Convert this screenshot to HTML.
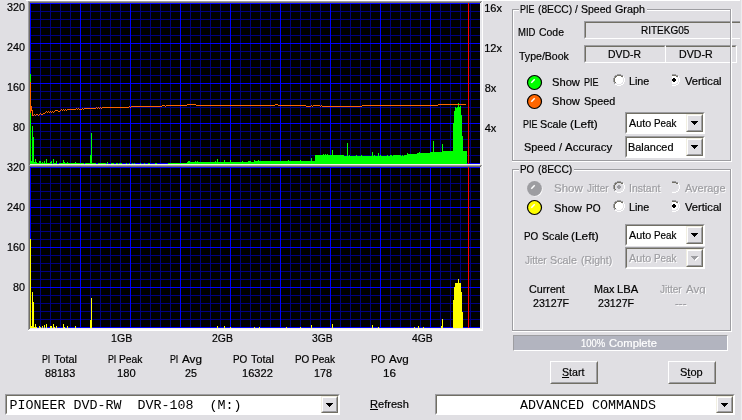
<!DOCTYPE html>
<html>
<head>
<meta charset="utf-8">
<title>PIE (8ECC) / Speed Graph</title>
<style>
html,body{margin:0;padding:0;}
body{width:742px;height:420px;overflow:hidden;background:#e0dfe3;position:relative;
 font-family:"Liberation Sans",sans-serif;font-size:11px;color:#000;}
#w{position:absolute;left:0;top:0;width:742px;height:420px;will-change:transform;-webkit-text-stroke:0.2px currentColor;}
.t{position:absolute;white-space:nowrap;line-height:13px;height:13px;font-size:11px;transform-origin:0 0;}
.mw{width:742px;}
.mw span{position:absolute;top:0;transform-origin:0 0;white-space:nowrap;}
.dis{color:#9d9da1;text-shadow:1px 1px 0 #fff;}
.wht{color:#fff;}
.ln{position:absolute;background:#9d9da1;}
.lw{position:absolute;background:#fff;}
.gt{position:absolute;background:#e0dfe3;height:13px;}
.sunk{position:absolute;box-sizing:border-box;border:1px solid;border-color:#9d9da1 #fff #fff #9d9da1;}
.sunk:before{content:"";position:absolute;left:0;top:0;right:0;bottom:0;border:1px solid;border-color:#716f64 #f1efe2 #f1efe2 #716f64;}
.fld{background:#e0dfe3;}
.fld:before{border-color:#716f64 #e0dfe3 #e0dfe3 #716f64;}
.cmb{background:#fff;}
.cmb:before{border-color:#716f64 #fff #fff #716f64;}
.cmb.off{background:#e0dfe3;}
.btn{position:absolute;box-sizing:border-box;background:#e0dfe3;border:1px solid;border-color:#f1efe2 #716f64 #716f64 #f1efe2;}
.btn:before{content:"";position:absolute;left:0;top:0;right:0;bottom:0;border:1px solid;border-color:#fff #9d9da1 #9d9da1 #fff;}
.pb{border-color:#fff #716f64 #716f64 #fff;}
.pb:before{border-color:#e0dfe3 #9d9da1 #9d9da1 #e0dfe3;}
.dd{right:1px;top:1px;bottom:1px;width:17px;}
.dd svg{position:absolute;left:4px;top:6px;width:8px;height:5px;}
.dd.rc{width:17px;}
.dd.rc svg{left:4px;top:6px;}
.mono{position:absolute;font-family:"Liberation Mono",monospace;font-size:13.33px;line-height:16px;white-space:pre;-webkit-text-stroke:0;color:#000;}
.led{position:absolute;width:17px;height:17px;}
.rad{position:absolute;width:12px;height:12px;}
.cov{position:absolute;background:#e0dfe3;}
u{text-decoration:underline;}
</style>
</head>
<body>
<div id="w">
<div class="lw" style="left:26px;top:0;width:714px;height:1px"></div>
<svg width="455" height="330" viewBox="0 0 455 330" shape-rendering="crispEdges" style="position:absolute;left:28px;top:1px">
<rect x="452" y="0" width="1" height="330" fill="#eaeaed"/>
<rect x="453" y="0" width="1" height="330" fill="#e6e6ea"/>
<rect x="454" y="0" width="1" height="330" fill="#ffffff"/>
<rect x="0" y="327" width="453" height="1" fill="#f1efe2"/>
<rect x="0" y="328" width="455" height="1" fill="#fafafa"/>
<rect x="0" y="329" width="455" height="1" fill="#ffffff"/>
<rect x="0" y="0" width="454" height="1" fill="#9d9da1"/>
<rect x="1" y="1" width="452" height="1" fill="#716f64"/>
<rect x="0" y="0" width="1" height="329" fill="#9d9da1"/>
<rect x="1" y="1" width="1" height="327" fill="#716f64"/>
<rect x="2" y="2" width="450" height="161" fill="#000"/>
<rect x="2" y="166" width="450" height="161" fill="#000"/>
<rect x="2" y="163" width="451" height="1" fill="#f1efe2"/>
<rect x="0" y="164" width="454" height="1" fill="#9d9da1"/>
<rect x="1" y="165" width="452" height="1" fill="#716f64"/>
<rect x="2" y="10" width="450" height="1" fill="#000080"/>
<rect x="2" y="18" width="450" height="1" fill="#000080"/>
<rect x="2" y="26" width="450" height="1" fill="#000080"/>
<rect x="2" y="34" width="450" height="1" fill="#000080"/>
<rect x="2" y="50" width="450" height="1" fill="#000080"/>
<rect x="2" y="58" width="450" height="1" fill="#000080"/>
<rect x="2" y="66" width="450" height="1" fill="#000080"/>
<rect x="2" y="74" width="450" height="1" fill="#000080"/>
<rect x="2" y="90" width="450" height="1" fill="#000080"/>
<rect x="2" y="98" width="450" height="1" fill="#000080"/>
<rect x="2" y="106" width="450" height="1" fill="#000080"/>
<rect x="2" y="114" width="450" height="1" fill="#000080"/>
<rect x="2" y="130" width="450" height="1" fill="#000080"/>
<rect x="2" y="138" width="450" height="1" fill="#000080"/>
<rect x="2" y="146" width="450" height="1" fill="#000080"/>
<rect x="2" y="154" width="450" height="1" fill="#000080"/>
<rect x="12" y="2" width="1" height="161" fill="#000080"/>
<rect x="22" y="2" width="1" height="161" fill="#000080"/>
<rect x="32" y="2" width="1" height="161" fill="#000080"/>
<rect x="42" y="2" width="1" height="161" fill="#000080"/>
<rect x="62" y="2" width="1" height="161" fill="#000080"/>
<rect x="72" y="2" width="1" height="161" fill="#000080"/>
<rect x="82" y="2" width="1" height="161" fill="#000080"/>
<rect x="92" y="2" width="1" height="161" fill="#000080"/>
<rect x="112" y="2" width="1" height="161" fill="#000080"/>
<rect x="122" y="2" width="1" height="161" fill="#000080"/>
<rect x="132" y="2" width="1" height="161" fill="#000080"/>
<rect x="142" y="2" width="1" height="161" fill="#000080"/>
<rect x="162" y="2" width="1" height="161" fill="#000080"/>
<rect x="172" y="2" width="1" height="161" fill="#000080"/>
<rect x="182" y="2" width="1" height="161" fill="#000080"/>
<rect x="192" y="2" width="1" height="161" fill="#000080"/>
<rect x="212" y="2" width="1" height="161" fill="#000080"/>
<rect x="222" y="2" width="1" height="161" fill="#000080"/>
<rect x="232" y="2" width="1" height="161" fill="#000080"/>
<rect x="242" y="2" width="1" height="161" fill="#000080"/>
<rect x="262" y="2" width="1" height="161" fill="#000080"/>
<rect x="272" y="2" width="1" height="161" fill="#000080"/>
<rect x="282" y="2" width="1" height="161" fill="#000080"/>
<rect x="292" y="2" width="1" height="161" fill="#000080"/>
<rect x="312" y="2" width="1" height="161" fill="#000080"/>
<rect x="322" y="2" width="1" height="161" fill="#000080"/>
<rect x="332" y="2" width="1" height="161" fill="#000080"/>
<rect x="342" y="2" width="1" height="161" fill="#000080"/>
<rect x="362" y="2" width="1" height="161" fill="#000080"/>
<rect x="372" y="2" width="1" height="161" fill="#000080"/>
<rect x="382" y="2" width="1" height="161" fill="#000080"/>
<rect x="392" y="2" width="1" height="161" fill="#000080"/>
<rect x="412" y="2" width="1" height="161" fill="#000080"/>
<rect x="422" y="2" width="1" height="161" fill="#000080"/>
<rect x="432" y="2" width="1" height="161" fill="#000080"/>
<rect x="442" y="2" width="1" height="161" fill="#000080"/>
<rect x="2" y="2" width="450" height="1" fill="#0000ff"/>
<rect x="2" y="42" width="450" height="1" fill="#0000ff"/>
<rect x="2" y="82" width="450" height="1" fill="#0000ff"/>
<rect x="2" y="122" width="450" height="1" fill="#0000ff"/>
<rect x="2" y="162" width="450" height="1" fill="#0000ff"/>
<rect x="2" y="2" width="1" height="161" fill="#0000ff"/>
<rect x="52" y="2" width="1" height="161" fill="#0000ff"/>
<rect x="102" y="2" width="1" height="161" fill="#0000ff"/>
<rect x="152" y="2" width="1" height="161" fill="#0000ff"/>
<rect x="202" y="2" width="1" height="161" fill="#0000ff"/>
<rect x="252" y="2" width="1" height="161" fill="#0000ff"/>
<rect x="302" y="2" width="1" height="161" fill="#0000ff"/>
<rect x="352" y="2" width="1" height="161" fill="#0000ff"/>
<rect x="402" y="2" width="1" height="161" fill="#0000ff"/>
<rect x="2" y="174" width="450" height="1" fill="#000080"/>
<rect x="2" y="182" width="450" height="1" fill="#000080"/>
<rect x="2" y="190" width="450" height="1" fill="#000080"/>
<rect x="2" y="198" width="450" height="1" fill="#000080"/>
<rect x="2" y="214" width="450" height="1" fill="#000080"/>
<rect x="2" y="222" width="450" height="1" fill="#000080"/>
<rect x="2" y="230" width="450" height="1" fill="#000080"/>
<rect x="2" y="238" width="450" height="1" fill="#000080"/>
<rect x="2" y="254" width="450" height="1" fill="#000080"/>
<rect x="2" y="262" width="450" height="1" fill="#000080"/>
<rect x="2" y="270" width="450" height="1" fill="#000080"/>
<rect x="2" y="278" width="450" height="1" fill="#000080"/>
<rect x="2" y="294" width="450" height="1" fill="#000080"/>
<rect x="2" y="302" width="450" height="1" fill="#000080"/>
<rect x="2" y="310" width="450" height="1" fill="#000080"/>
<rect x="2" y="318" width="450" height="1" fill="#000080"/>
<rect x="12" y="166" width="1" height="161" fill="#000080"/>
<rect x="22" y="166" width="1" height="161" fill="#000080"/>
<rect x="32" y="166" width="1" height="161" fill="#000080"/>
<rect x="42" y="166" width="1" height="161" fill="#000080"/>
<rect x="62" y="166" width="1" height="161" fill="#000080"/>
<rect x="72" y="166" width="1" height="161" fill="#000080"/>
<rect x="82" y="166" width="1" height="161" fill="#000080"/>
<rect x="92" y="166" width="1" height="161" fill="#000080"/>
<rect x="112" y="166" width="1" height="161" fill="#000080"/>
<rect x="122" y="166" width="1" height="161" fill="#000080"/>
<rect x="132" y="166" width="1" height="161" fill="#000080"/>
<rect x="142" y="166" width="1" height="161" fill="#000080"/>
<rect x="162" y="166" width="1" height="161" fill="#000080"/>
<rect x="172" y="166" width="1" height="161" fill="#000080"/>
<rect x="182" y="166" width="1" height="161" fill="#000080"/>
<rect x="192" y="166" width="1" height="161" fill="#000080"/>
<rect x="212" y="166" width="1" height="161" fill="#000080"/>
<rect x="222" y="166" width="1" height="161" fill="#000080"/>
<rect x="232" y="166" width="1" height="161" fill="#000080"/>
<rect x="242" y="166" width="1" height="161" fill="#000080"/>
<rect x="262" y="166" width="1" height="161" fill="#000080"/>
<rect x="272" y="166" width="1" height="161" fill="#000080"/>
<rect x="282" y="166" width="1" height="161" fill="#000080"/>
<rect x="292" y="166" width="1" height="161" fill="#000080"/>
<rect x="312" y="166" width="1" height="161" fill="#000080"/>
<rect x="322" y="166" width="1" height="161" fill="#000080"/>
<rect x="332" y="166" width="1" height="161" fill="#000080"/>
<rect x="342" y="166" width="1" height="161" fill="#000080"/>
<rect x="362" y="166" width="1" height="161" fill="#000080"/>
<rect x="372" y="166" width="1" height="161" fill="#000080"/>
<rect x="382" y="166" width="1" height="161" fill="#000080"/>
<rect x="392" y="166" width="1" height="161" fill="#000080"/>
<rect x="412" y="166" width="1" height="161" fill="#000080"/>
<rect x="422" y="166" width="1" height="161" fill="#000080"/>
<rect x="432" y="166" width="1" height="161" fill="#000080"/>
<rect x="442" y="166" width="1" height="161" fill="#000080"/>
<rect x="2" y="166" width="450" height="1" fill="#0000ff"/>
<rect x="2" y="206" width="450" height="1" fill="#0000ff"/>
<rect x="2" y="246" width="450" height="1" fill="#0000ff"/>
<rect x="2" y="286" width="450" height="1" fill="#0000ff"/>
<rect x="2" y="326" width="450" height="1" fill="#0000ff"/>
<rect x="2" y="166" width="1" height="161" fill="#0000ff"/>
<rect x="52" y="166" width="1" height="161" fill="#0000ff"/>
<rect x="102" y="166" width="1" height="161" fill="#0000ff"/>
<rect x="152" y="166" width="1" height="161" fill="#0000ff"/>
<rect x="202" y="166" width="1" height="161" fill="#0000ff"/>
<rect x="252" y="166" width="1" height="161" fill="#0000ff"/>
<rect x="302" y="166" width="1" height="161" fill="#0000ff"/>
<rect x="352" y="166" width="1" height="161" fill="#0000ff"/>
<rect x="402" y="166" width="1" height="161" fill="#0000ff"/>
<rect x="2" y="73" width="1" height="90" fill="#00ff00"/>
<rect x="3" y="160" width="1" height="3" fill="#00ff00"/>
<rect x="4" y="125" width="1" height="38" fill="#00ff00"/>
<rect x="5" y="136" width="1" height="27" fill="#00ff00"/>
<rect x="6" y="161" width="1" height="2" fill="#00ff00"/>
<rect x="7" y="158" width="1" height="5" fill="#00ff00"/>
<rect x="8" y="161" width="1" height="2" fill="#00ff00"/>
<rect x="9" y="162" width="2" height="1" fill="#00ff00"/>
<rect x="11" y="160" width="2" height="3" fill="#00ff00"/>
<rect x="13" y="162" width="1" height="1" fill="#00ff00"/>
<rect x="14" y="161" width="1" height="2" fill="#00ff00"/>
<rect x="15" y="162" width="1" height="1" fill="#00ff00"/>
<rect x="16" y="160" width="1" height="3" fill="#00ff00"/>
<rect x="17" y="162" width="1" height="1" fill="#00ff00"/>
<rect x="18" y="158" width="1" height="5" fill="#00ff00"/>
<rect x="19" y="162" width="3" height="1" fill="#00ff00"/>
<rect x="22" y="161" width="1" height="2" fill="#00ff00"/>
<rect x="23" y="160" width="1" height="3" fill="#00ff00"/>
<rect x="25" y="158" width="1" height="5" fill="#00ff00"/>
<rect x="26" y="162" width="2" height="1" fill="#00ff00"/>
<rect x="28" y="160" width="1" height="3" fill="#00ff00"/>
<rect x="31" y="162" width="4" height="1" fill="#00ff00"/>
<rect x="35" y="159" width="1" height="4" fill="#00ff00"/>
<rect x="36" y="161" width="1" height="2" fill="#00ff00"/>
<rect x="37" y="162" width="2" height="1" fill="#00ff00"/>
<rect x="39" y="161" width="1" height="2" fill="#00ff00"/>
<rect x="40" y="162" width="7" height="1" fill="#00ff00"/>
<rect x="47" y="161" width="1" height="2" fill="#00ff00"/>
<rect x="48" y="162" width="8" height="1" fill="#00ff00"/>
<rect x="57" y="162" width="5" height="1" fill="#00ff00"/>
<rect x="62" y="154" width="1" height="9" fill="#00ff00"/>
<rect x="63" y="132" width="1" height="31" fill="#00ff00"/>
<rect x="64" y="162" width="4" height="1" fill="#00ff00"/>
<rect x="70" y="162" width="8" height="1" fill="#00ff00"/>
<rect x="79" y="161" width="1" height="2" fill="#00ff00"/>
<rect x="83" y="162" width="3" height="1" fill="#00ff00"/>
<rect x="88" y="162" width="2" height="1" fill="#00ff00"/>
<rect x="91" y="162" width="3" height="1" fill="#00ff00"/>
<rect x="98" y="162" width="1" height="1" fill="#00ff00"/>
<rect x="101" y="162" width="1" height="1" fill="#00ff00"/>
<rect x="104" y="162" width="1" height="1" fill="#00ff00"/>
<rect x="106" y="162" width="1" height="1" fill="#00ff00"/>
<rect x="112" y="162" width="1" height="1" fill="#00ff00"/>
<rect x="116" y="162" width="1" height="1" fill="#00ff00"/>
<rect x="120" y="162" width="2" height="1" fill="#00ff00"/>
<rect x="127" y="162" width="2" height="1" fill="#00ff00"/>
<rect x="140" y="162" width="19" height="1" fill="#00ff00"/>
<rect x="159" y="161" width="1" height="2" fill="#00ff00"/>
<rect x="160" y="160" width="2" height="3" fill="#00ff00"/>
<rect x="162" y="161" width="5" height="2" fill="#00ff00"/>
<rect x="167" y="160" width="1" height="3" fill="#00ff00"/>
<rect x="168" y="161" width="1" height="2" fill="#00ff00"/>
<rect x="169" y="160" width="1" height="3" fill="#00ff00"/>
<rect x="170" y="161" width="17" height="2" fill="#00ff00"/>
<rect x="187" y="160" width="1" height="3" fill="#00ff00"/>
<rect x="188" y="161" width="1" height="2" fill="#00ff00"/>
<rect x="189" y="158" width="1" height="5" fill="#00ff00"/>
<rect x="190" y="161" width="6" height="2" fill="#00ff00"/>
<rect x="196" y="159" width="1" height="4" fill="#00ff00"/>
<rect x="197" y="161" width="5" height="2" fill="#00ff00"/>
<rect x="202" y="159" width="1" height="4" fill="#00ff00"/>
<rect x="203" y="161" width="11" height="2" fill="#00ff00"/>
<rect x="214" y="160" width="1" height="3" fill="#00ff00"/>
<rect x="215" y="161" width="5" height="2" fill="#00ff00"/>
<rect x="220" y="160" width="3" height="3" fill="#00ff00"/>
<rect x="223" y="161" width="3" height="2" fill="#00ff00"/>
<rect x="226" y="159" width="1" height="4" fill="#00ff00"/>
<rect x="227" y="160" width="3" height="3" fill="#00ff00"/>
<rect x="230" y="159" width="1" height="4" fill="#00ff00"/>
<rect x="231" y="160" width="29" height="3" fill="#00ff00"/>
<rect x="260" y="159" width="1" height="4" fill="#00ff00"/>
<rect x="261" y="160" width="11" height="3" fill="#00ff00"/>
<rect x="272" y="159" width="1" height="4" fill="#00ff00"/>
<rect x="273" y="160" width="10" height="3" fill="#00ff00"/>
<rect x="283" y="157" width="1" height="6" fill="#00ff00"/>
<rect x="284" y="160" width="3" height="3" fill="#00ff00"/>
<rect x="287" y="154" width="8" height="9" fill="#00ff00"/>
<rect x="295" y="153" width="1" height="10" fill="#00ff00"/>
<rect x="296" y="154" width="1" height="9" fill="#00ff00"/>
<rect x="297" y="153" width="1" height="10" fill="#00ff00"/>
<rect x="298" y="154" width="1" height="9" fill="#00ff00"/>
<rect x="299" y="153" width="1" height="10" fill="#00ff00"/>
<rect x="300" y="154" width="4" height="9" fill="#00ff00"/>
<rect x="304" y="149" width="1" height="14" fill="#00ff00"/>
<rect x="305" y="154" width="11" height="9" fill="#00ff00"/>
<rect x="316" y="155" width="3" height="8" fill="#00ff00"/>
<rect x="319" y="142" width="1" height="21" fill="#00ff00"/>
<rect x="320" y="155" width="1" height="8" fill="#00ff00"/>
<rect x="321" y="154" width="1" height="9" fill="#00ff00"/>
<rect x="322" y="155" width="6" height="8" fill="#00ff00"/>
<rect x="328" y="154" width="1" height="9" fill="#00ff00"/>
<rect x="329" y="155" width="4" height="8" fill="#00ff00"/>
<rect x="333" y="154" width="1" height="9" fill="#00ff00"/>
<rect x="334" y="155" width="10" height="8" fill="#00ff00"/>
<rect x="344" y="151" width="1" height="12" fill="#00ff00"/>
<rect x="345" y="155" width="1" height="8" fill="#00ff00"/>
<rect x="346" y="154" width="1" height="9" fill="#00ff00"/>
<rect x="347" y="155" width="3" height="8" fill="#00ff00"/>
<rect x="350" y="152" width="1" height="11" fill="#00ff00"/>
<rect x="351" y="155" width="1" height="8" fill="#00ff00"/>
<rect x="352" y="154" width="1" height="9" fill="#00ff00"/>
<rect x="353" y="155" width="6" height="8" fill="#00ff00"/>
<rect x="359" y="154" width="1" height="9" fill="#00ff00"/>
<rect x="360" y="155" width="2" height="8" fill="#00ff00"/>
<rect x="362" y="154" width="2" height="9" fill="#00ff00"/>
<rect x="364" y="155" width="1" height="8" fill="#00ff00"/>
<rect x="365" y="154" width="8" height="9" fill="#00ff00"/>
<rect x="373" y="155" width="1" height="8" fill="#00ff00"/>
<rect x="374" y="154" width="1" height="9" fill="#00ff00"/>
<rect x="375" y="155" width="1" height="8" fill="#00ff00"/>
<rect x="376" y="154" width="3" height="9" fill="#00ff00"/>
<rect x="379" y="152" width="1" height="11" fill="#00ff00"/>
<rect x="380" y="153" width="9" height="10" fill="#00ff00"/>
<rect x="389" y="152" width="2" height="11" fill="#00ff00"/>
<rect x="391" y="151" width="1" height="12" fill="#00ff00"/>
<rect x="392" y="152" width="10" height="11" fill="#00ff00"/>
<rect x="402" y="151" width="3" height="12" fill="#00ff00"/>
<rect x="405" y="140" width="1" height="23" fill="#00ff00"/>
<rect x="406" y="151" width="8" height="12" fill="#00ff00"/>
<rect x="414" y="143" width="1" height="20" fill="#00ff00"/>
<rect x="415" y="150" width="10" height="13" fill="#00ff00"/>
<rect x="425" y="122" width="1" height="41" fill="#00ff00"/>
<rect x="426" y="110" width="1" height="53" fill="#00ff00"/>
<rect x="427" y="106" width="1" height="57" fill="#00ff00"/>
<rect x="428" y="107" width="1" height="56" fill="#00ff00"/>
<rect x="429" y="106" width="1" height="57" fill="#00ff00"/>
<rect x="430" y="102" width="1" height="61" fill="#00ff00"/>
<rect x="431" y="106" width="1" height="57" fill="#00ff00"/>
<rect x="432" y="105" width="1" height="58" fill="#00ff00"/>
<rect x="433" y="114" width="1" height="49" fill="#00ff00"/>
<rect x="434" y="135" width="1" height="28" fill="#00ff00"/>
<rect x="435" y="150" width="4" height="13" fill="#00ff00"/>
<rect x="2" y="238" width="1" height="89" fill="#ffff00"/>
<rect x="3" y="325" width="1" height="2" fill="#ffff00"/>
<rect x="4" y="291" width="1" height="36" fill="#ffff00"/>
<rect x="5" y="301" width="1" height="26" fill="#ffff00"/>
<rect x="6" y="326" width="1" height="1" fill="#ffff00"/>
<rect x="7" y="323" width="1" height="4" fill="#ffff00"/>
<rect x="8" y="326" width="1" height="1" fill="#ffff00"/>
<rect x="11" y="325" width="1" height="2" fill="#ffff00"/>
<rect x="12" y="326" width="1" height="1" fill="#ffff00"/>
<rect x="14" y="325" width="1" height="2" fill="#ffff00"/>
<rect x="16" y="324" width="1" height="3" fill="#ffff00"/>
<rect x="18" y="323" width="1" height="4" fill="#ffff00"/>
<rect x="22" y="325" width="2" height="2" fill="#ffff00"/>
<rect x="25" y="323" width="1" height="4" fill="#ffff00"/>
<rect x="26" y="326" width="1" height="1" fill="#ffff00"/>
<rect x="28" y="325" width="1" height="2" fill="#ffff00"/>
<rect x="35" y="323" width="1" height="4" fill="#ffff00"/>
<rect x="36" y="326" width="1" height="1" fill="#ffff00"/>
<rect x="39" y="325" width="1" height="2" fill="#ffff00"/>
<rect x="47" y="325" width="1" height="2" fill="#ffff00"/>
<rect x="62" y="319" width="1" height="8" fill="#ffff00"/>
<rect x="63" y="297" width="1" height="30" fill="#ffff00"/>
<rect x="189" y="325" width="1" height="2" fill="#ffff00"/>
<rect x="196" y="325" width="1" height="2" fill="#ffff00"/>
<rect x="202" y="326" width="1" height="1" fill="#ffff00"/>
<rect x="226" y="326" width="1" height="1" fill="#ffff00"/>
<rect x="231" y="326" width="1" height="1" fill="#ffff00"/>
<rect x="258" y="326" width="1" height="1" fill="#ffff00"/>
<rect x="272" y="326" width="1" height="1" fill="#ffff00"/>
<rect x="283" y="324" width="1" height="3" fill="#ffff00"/>
<rect x="304" y="323" width="1" height="4" fill="#ffff00"/>
<rect x="344" y="324" width="1" height="3" fill="#ffff00"/>
<rect x="350" y="326" width="1" height="1" fill="#ffff00"/>
<rect x="386" y="326" width="1" height="1" fill="#ffff00"/>
<rect x="390" y="325" width="1" height="2" fill="#ffff00"/>
<rect x="395" y="326" width="1" height="1" fill="#ffff00"/>
<rect x="413" y="325" width="1" height="2" fill="#ffff00"/>
<rect x="414" y="318" width="1" height="9" fill="#ffff00"/>
<rect x="425" y="299" width="1" height="28" fill="#ffff00"/>
<rect x="426" y="286" width="1" height="41" fill="#ffff00"/>
<rect x="427" y="282" width="3" height="45" fill="#ffff00"/>
<rect x="430" y="278" width="1" height="49" fill="#ffff00"/>
<rect x="431" y="282" width="2" height="45" fill="#ffff00"/>
<rect x="433" y="291" width="1" height="36" fill="#ffff00"/>
<rect x="434" y="311" width="1" height="16" fill="#ffff00"/>
<rect x="2" y="81" width="1" height="31" fill="#ff6600"/>
<rect x="3" y="105" width="1" height="5" fill="#ff6600"/>
<rect x="4" y="109" width="1" height="6" fill="#ff6600"/>
<rect x="5" y="114" width="1" height="1" fill="#ff6600"/>
<rect x="6" y="113" width="1" height="1" fill="#ff6600"/>
<rect x="7" y="114" width="1" height="1" fill="#ff6600"/>
<rect x="8" y="113" width="2" height="1" fill="#ff6600"/>
<rect x="10" y="114" width="1" height="1" fill="#ff6600"/>
<rect x="11" y="113" width="1" height="1" fill="#ff6600"/>
<rect x="12" y="112" width="1" height="1" fill="#ff6600"/>
<rect x="13" y="113" width="2" height="1" fill="#ff6600"/>
<rect x="15" y="112" width="2" height="1" fill="#ff6600"/>
<rect x="17" y="111" width="1" height="1" fill="#ff6600"/>
<rect x="18" y="110" width="1" height="1" fill="#ff6600"/>
<rect x="19" y="111" width="1" height="1" fill="#ff6600"/>
<rect x="20" y="110" width="1" height="1" fill="#ff6600"/>
<rect x="21" y="111" width="1" height="1" fill="#ff6600"/>
<rect x="22" y="110" width="1" height="1" fill="#ff6600"/>
<rect x="23" y="111" width="1" height="1" fill="#ff6600"/>
<rect x="24" y="110" width="1" height="1" fill="#ff6600"/>
<rect x="25" y="111" width="1" height="1" fill="#ff6600"/>
<rect x="26" y="110" width="1" height="1" fill="#ff6600"/>
<rect x="27" y="109" width="3" height="1" fill="#ff6600"/>
<rect x="30" y="110" width="2" height="1" fill="#ff6600"/>
<rect x="32" y="109" width="1" height="1" fill="#ff6600"/>
<rect x="33" y="108" width="1" height="1" fill="#ff6600"/>
<rect x="34" y="109" width="1" height="1" fill="#ff6600"/>
<rect x="35" y="108" width="1" height="1" fill="#ff6600"/>
<rect x="36" y="109" width="1" height="1" fill="#ff6600"/>
<rect x="37" y="108" width="1" height="1" fill="#ff6600"/>
<rect x="38" y="109" width="1" height="1" fill="#ff6600"/>
<rect x="39" y="108" width="9" height="1" fill="#ff6600"/>
<rect x="48" y="107" width="1" height="1" fill="#ff6600"/>
<rect x="49" y="108" width="1" height="1" fill="#ff6600"/>
<rect x="50" y="107" width="1" height="1" fill="#ff6600"/>
<rect x="51" y="108" width="3" height="1" fill="#ff6600"/>
<rect x="54" y="107" width="1" height="1" fill="#ff6600"/>
<rect x="55" y="108" width="1" height="1" fill="#ff6600"/>
<rect x="56" y="107" width="12" height="1" fill="#ff6600"/>
<rect x="68" y="106" width="1" height="1" fill="#ff6600"/>
<rect x="69" y="107" width="1" height="1" fill="#ff6600"/>
<rect x="70" y="106" width="1" height="1" fill="#ff6600"/>
<rect x="71" y="107" width="1" height="1" fill="#ff6600"/>
<rect x="72" y="106" width="1" height="1" fill="#ff6600"/>
<rect x="73" y="107" width="1" height="1" fill="#ff6600"/>
<rect x="74" y="106" width="27" height="1" fill="#ff6600"/>
<rect x="101" y="105" width="1" height="1" fill="#ff6600"/>
<rect x="102" y="106" width="1" height="1" fill="#ff6600"/>
<rect x="103" y="105" width="31" height="1" fill="#ff6600"/>
<rect x="134" y="104" width="3" height="1" fill="#ff6600"/>
<rect x="137" y="105" width="1" height="1" fill="#ff6600"/>
<rect x="138" y="104" width="21" height="1" fill="#ff6600"/>
<rect x="159" y="103" width="9" height="1" fill="#ff6600"/>
<rect x="168" y="104" width="79" height="1" fill="#ff6600"/>
<rect x="247" y="103" width="3" height="1" fill="#ff6600"/>
<rect x="250" y="104" width="28" height="1" fill="#ff6600"/>
<rect x="278" y="105" width="5" height="1" fill="#ff6600"/>
<rect x="283" y="104" width="1" height="1" fill="#ff6600"/>
<rect x="284" y="105" width="1" height="1" fill="#ff6600"/>
<rect x="285" y="104" width="7" height="1" fill="#ff6600"/>
<rect x="292" y="105" width="1" height="1" fill="#ff6600"/>
<rect x="293" y="104" width="1" height="1" fill="#ff6600"/>
<rect x="294" y="105" width="40" height="1" fill="#ff6600"/>
<rect x="334" y="104" width="76" height="1" fill="#ff6600"/>
<rect x="410" y="103" width="28" height="1" fill="#ff6600"/>
<rect x="440" y="2" width="1" height="161" fill="#ff0000"/>
<rect x="440" y="166" width="1" height="161" fill="#ff0000"/>
</svg>

<!-- bottom row -->
<div class="sunk cmb" style="left:5px;top:394px;width:335px;height:21px">
  <div class="mono" style="left:3.5px;top:3px">PIONEER DVD-RW  DVR-108  (M:)</div>
  <div class="btn dd"><svg viewBox="0 0 8 5" shape-rendering="crispEdges"><path d="M0 0h7v1h-1v1h-1v1h-1v1h-1v-1h-1v-1h-1v-1h-1z" fill="#000"/></svg></div>
</div>
<div class="sunk cmb" style="left:435px;top:394px;width:300px;height:21px">
  <div class="mono" style="left:84px;top:3px">ADVANCED COMMANDS</div>
  <div class="btn dd"><svg viewBox="0 0 8 5" shape-rendering="crispEdges"><path d="M0 0h7v1h-1v1h-1v1h-1v1h-1v-1h-1v-1h-1v-1h-1z" fill="#000"/></svg></div>
</div>

<!-- PIE group frame -->
<div class="ln" style="left:512px;top:9px;width:219px;height:1px"></div>
<div class="lw" style="left:513px;top:10px;width:217px;height:1px"></div>
<div class="ln" style="left:512px;top:9px;width:1px;height:152px"></div>
<div class="lw" style="left:513px;top:10px;width:1px;height:150px"></div>
<div class="ln" style="left:512px;top:160px;width:219px;height:1px"></div>
<div class="lw" style="left:512px;top:161px;width:220px;height:1px"></div>
<div class="gt" style="left:519px;top:3px;width:128px"></div>
<!-- fields -->
<div class="sunk fld" style="left:584px;top:21px;width:170px;height:18px"></div>
<div class="sunk fld" style="left:660px;top:45px;width:77px;height:18px"></div>
<div class="sunk fld" style="left:584px;top:45px;width:82px;height:18px"></div>
<div class="ln" style="left:730px;top:9px;width:1px;height:152px"></div>
<div class="lw" style="left:731px;top:9px;width:1px;height:153px"></div>

<svg class="led" style="left:526px;top:74px" viewBox="0 0 17 17"><circle cx="8.5" cy="8.5" r="7" fill="#00ff00" stroke="#000" stroke-width="1.2"/><path d="M5.3 8.7 L8.7 5.3" stroke="#fff" stroke-width="1.5" fill="none"/></svg>
<svg class="led" style="left:526px;top:93px" viewBox="0 0 17 17"><circle cx="8.5" cy="8.5" r="7" fill="#ff6600" stroke="#000" stroke-width="1.2"/><path d="M5.3 8.7 L8.7 5.3" stroke="#fff" stroke-width="1.5" fill="none"/></svg>


<div class="sunk cmb" style="left:625px;top:112px;width:80px;height:22px"><div class="btn dd rc"><svg viewBox="0 0 8 5" shape-rendering="crispEdges"><path d="M0 0h7v1h-1v1h-1v1h-1v1h-1v-1h-1v-1h-1v-1h-1z" fill="#000"/></svg></div></div>
<div class="sunk cmb" style="left:625px;top:136px;width:80px;height:22px"><div class="btn dd rc"><svg viewBox="0 0 8 5" shape-rendering="crispEdges"><path d="M0 0h7v1h-1v1h-1v1h-1v1h-1v-1h-1v-1h-1v-1h-1z" fill="#000"/></svg></div></div>

<svg width="12" height="12" viewBox="0 0 12 12" shape-rendering="crispEdges" style="position:absolute;left:613px;top:74px"><rect x="4" y="0" width="4" height="1" fill="#9d9da1"/><rect x="2" y="1" width="2" height="1" fill="#9d9da1"/><rect x="4" y="1" width="4" height="1" fill="#716f64"/><rect x="8" y="1" width="2" height="1" fill="#9d9da1"/><rect x="1" y="2" width="1" height="1" fill="#9d9da1"/><rect x="2" y="2" width="2" height="1" fill="#716f64"/><rect x="4" y="2" width="4" height="1" fill="#ffffff"/><rect x="8" y="2" width="2" height="1" fill="#716f64"/><rect x="10" y="2" width="1" height="1" fill="#ffffff"/><rect x="1" y="3" width="1" height="1" fill="#9d9da1"/><rect x="2" y="3" width="1" height="1" fill="#716f64"/><rect x="3" y="3" width="6" height="1" fill="#ffffff"/><rect x="9" y="3" width="1" height="1" fill="#e4e3e7"/><rect x="10" y="3" width="1" height="1" fill="#ffffff"/><rect x="0" y="4" width="1" height="1" fill="#9d9da1"/><rect x="1" y="4" width="1" height="1" fill="#716f64"/><rect x="2" y="4" width="8" height="1" fill="#ffffff"/><rect x="10" y="4" width="1" height="1" fill="#e4e3e7"/><rect x="11" y="4" width="1" height="1" fill="#ffffff"/><rect x="0" y="5" width="1" height="1" fill="#9d9da1"/><rect x="1" y="5" width="1" height="1" fill="#716f64"/><rect x="2" y="5" width="8" height="1" fill="#ffffff"/><rect x="10" y="5" width="1" height="1" fill="#e4e3e7"/><rect x="11" y="5" width="1" height="1" fill="#ffffff"/><rect x="0" y="6" width="1" height="1" fill="#9d9da1"/><rect x="1" y="6" width="1" height="1" fill="#716f64"/><rect x="2" y="6" width="8" height="1" fill="#ffffff"/><rect x="10" y="6" width="1" height="1" fill="#e4e3e7"/><rect x="11" y="6" width="1" height="1" fill="#ffffff"/><rect x="0" y="7" width="1" height="1" fill="#9d9da1"/><rect x="1" y="7" width="1" height="1" fill="#716f64"/><rect x="2" y="7" width="8" height="1" fill="#ffffff"/><rect x="10" y="7" width="1" height="1" fill="#e4e3e7"/><rect x="11" y="7" width="1" height="1" fill="#ffffff"/><rect x="1" y="8" width="1" height="1" fill="#9d9da1"/><rect x="2" y="8" width="1" height="1" fill="#716f64"/><rect x="3" y="8" width="6" height="1" fill="#ffffff"/><rect x="9" y="8" width="1" height="1" fill="#e4e3e7"/><rect x="10" y="8" width="1" height="1" fill="#ffffff"/><rect x="1" y="9" width="1" height="1" fill="#9d9da1"/><rect x="2" y="9" width="2" height="1" fill="#e4e3e7"/><rect x="4" y="9" width="4" height="1" fill="#ffffff"/><rect x="8" y="9" width="2" height="1" fill="#e4e3e7"/><rect x="10" y="9" width="1" height="1" fill="#ffffff"/><rect x="2" y="10" width="2" height="1" fill="#ffffff"/><rect x="4" y="10" width="4" height="1" fill="#e4e3e7"/><rect x="8" y="10" width="2" height="1" fill="#ffffff"/><rect x="4" y="11" width="4" height="1" fill="#ffffff"/></svg>
<svg width="12" height="12" viewBox="0 0 12 12" shape-rendering="crispEdges" style="position:absolute;left:668px;top:74px"><rect x="4" y="0" width="4" height="1" fill="#9d9da1"/><rect x="4" y="1" width="4" height="1" fill="#716f64"/><rect x="8" y="1" width="2" height="1" fill="#9d9da1"/><rect x="4" y="2" width="4" height="1" fill="#ffffff"/><rect x="8" y="2" width="2" height="1" fill="#716f64"/><rect x="10" y="2" width="1" height="1" fill="#ffffff"/><rect x="4" y="3" width="5" height="1" fill="#ffffff"/><rect x="9" y="3" width="1" height="1" fill="#e4e3e7"/><rect x="10" y="3" width="1" height="1" fill="#ffffff"/><rect x="4" y="4" width="1" height="1" fill="#ffffff"/><rect x="5" y="4" width="2" height="1" fill="#000000"/><rect x="7" y="4" width="3" height="1" fill="#ffffff"/><rect x="10" y="4" width="1" height="1" fill="#e4e3e7"/><rect x="11" y="4" width="1" height="1" fill="#ffffff"/><rect x="4" y="5" width="4" height="1" fill="#000000"/><rect x="8" y="5" width="2" height="1" fill="#ffffff"/><rect x="10" y="5" width="1" height="1" fill="#e4e3e7"/><rect x="11" y="5" width="1" height="1" fill="#ffffff"/><rect x="4" y="6" width="4" height="1" fill="#000000"/><rect x="8" y="6" width="2" height="1" fill="#ffffff"/><rect x="10" y="6" width="1" height="1" fill="#e4e3e7"/><rect x="11" y="6" width="1" height="1" fill="#ffffff"/><rect x="4" y="7" width="1" height="1" fill="#ffffff"/><rect x="5" y="7" width="2" height="1" fill="#000000"/><rect x="7" y="7" width="3" height="1" fill="#ffffff"/><rect x="10" y="7" width="1" height="1" fill="#e4e3e7"/><rect x="11" y="7" width="1" height="1" fill="#ffffff"/><rect x="4" y="8" width="5" height="1" fill="#ffffff"/><rect x="9" y="8" width="1" height="1" fill="#e4e3e7"/><rect x="10" y="8" width="1" height="1" fill="#ffffff"/><rect x="4" y="9" width="4" height="1" fill="#ffffff"/><rect x="8" y="9" width="2" height="1" fill="#e4e3e7"/><rect x="10" y="9" width="1" height="1" fill="#ffffff"/><rect x="4" y="10" width="4" height="1" fill="#e4e3e7"/><rect x="8" y="10" width="2" height="1" fill="#ffffff"/><rect x="4" y="11" width="4" height="1" fill="#ffffff"/></svg>
<svg width="12" height="12" viewBox="0 0 12 12" shape-rendering="crispEdges" style="position:absolute;left:613px;top:181px"><rect x="4" y="0" width="4" height="1" fill="#9d9da1"/><rect x="2" y="1" width="2" height="1" fill="#9d9da1"/><rect x="4" y="1" width="4" height="1" fill="#716f64"/><rect x="8" y="1" width="2" height="1" fill="#9d9da1"/><rect x="1" y="2" width="1" height="1" fill="#9d9da1"/><rect x="2" y="2" width="2" height="1" fill="#716f64"/><rect x="4" y="2" width="4" height="1" fill="#e0dfe3"/><rect x="8" y="2" width="2" height="1" fill="#716f64"/><rect x="10" y="2" width="1" height="1" fill="#ffffff"/><rect x="1" y="3" width="1" height="1" fill="#9d9da1"/><rect x="2" y="3" width="1" height="1" fill="#716f64"/><rect x="3" y="3" width="6" height="1" fill="#e0dfe3"/><rect x="9" y="3" width="1" height="1" fill="#e4e3e7"/><rect x="10" y="3" width="1" height="1" fill="#ffffff"/><rect x="0" y="4" width="1" height="1" fill="#9d9da1"/><rect x="1" y="4" width="1" height="1" fill="#716f64"/><rect x="2" y="4" width="3" height="1" fill="#e0dfe3"/><rect x="5" y="4" width="2" height="1" fill="#9d9da1"/><rect x="7" y="4" width="3" height="1" fill="#e0dfe3"/><rect x="10" y="4" width="1" height="1" fill="#e4e3e7"/><rect x="11" y="4" width="1" height="1" fill="#ffffff"/><rect x="0" y="5" width="1" height="1" fill="#9d9da1"/><rect x="1" y="5" width="1" height="1" fill="#716f64"/><rect x="2" y="5" width="2" height="1" fill="#e0dfe3"/><rect x="4" y="5" width="4" height="1" fill="#9d9da1"/><rect x="8" y="5" width="2" height="1" fill="#e0dfe3"/><rect x="10" y="5" width="1" height="1" fill="#e4e3e7"/><rect x="11" y="5" width="1" height="1" fill="#ffffff"/><rect x="0" y="6" width="1" height="1" fill="#9d9da1"/><rect x="1" y="6" width="1" height="1" fill="#716f64"/><rect x="2" y="6" width="2" height="1" fill="#e0dfe3"/><rect x="4" y="6" width="4" height="1" fill="#9d9da1"/><rect x="8" y="6" width="2" height="1" fill="#e0dfe3"/><rect x="10" y="6" width="1" height="1" fill="#e4e3e7"/><rect x="11" y="6" width="1" height="1" fill="#ffffff"/><rect x="0" y="7" width="1" height="1" fill="#9d9da1"/><rect x="1" y="7" width="1" height="1" fill="#716f64"/><rect x="2" y="7" width="3" height="1" fill="#e0dfe3"/><rect x="5" y="7" width="2" height="1" fill="#9d9da1"/><rect x="7" y="7" width="3" height="1" fill="#e0dfe3"/><rect x="10" y="7" width="1" height="1" fill="#e4e3e7"/><rect x="11" y="7" width="1" height="1" fill="#ffffff"/><rect x="1" y="8" width="1" height="1" fill="#9d9da1"/><rect x="2" y="8" width="1" height="1" fill="#716f64"/><rect x="3" y="8" width="6" height="1" fill="#e0dfe3"/><rect x="9" y="8" width="1" height="1" fill="#e4e3e7"/><rect x="10" y="8" width="1" height="1" fill="#ffffff"/><rect x="1" y="9" width="1" height="1" fill="#9d9da1"/><rect x="2" y="9" width="2" height="1" fill="#e4e3e7"/><rect x="4" y="9" width="4" height="1" fill="#e0dfe3"/><rect x="8" y="9" width="2" height="1" fill="#e4e3e7"/><rect x="10" y="9" width="1" height="1" fill="#ffffff"/><rect x="2" y="10" width="2" height="1" fill="#ffffff"/><rect x="4" y="10" width="4" height="1" fill="#e4e3e7"/><rect x="8" y="10" width="2" height="1" fill="#ffffff"/><rect x="4" y="11" width="4" height="1" fill="#ffffff"/></svg>
<svg width="12" height="12" viewBox="0 0 12 12" shape-rendering="crispEdges" style="position:absolute;left:668px;top:181px"><rect x="4" y="0" width="4" height="1" fill="#9d9da1"/><rect x="4" y="1" width="4" height="1" fill="#716f64"/><rect x="8" y="1" width="2" height="1" fill="#9d9da1"/><rect x="4" y="2" width="4" height="1" fill="#e0dfe3"/><rect x="8" y="2" width="2" height="1" fill="#716f64"/><rect x="10" y="2" width="1" height="1" fill="#ffffff"/><rect x="4" y="3" width="5" height="1" fill="#e0dfe3"/><rect x="9" y="3" width="1" height="1" fill="#e4e3e7"/><rect x="10" y="3" width="1" height="1" fill="#ffffff"/><rect x="4" y="4" width="6" height="1" fill="#e0dfe3"/><rect x="10" y="4" width="1" height="1" fill="#e4e3e7"/><rect x="11" y="4" width="1" height="1" fill="#ffffff"/><rect x="4" y="5" width="6" height="1" fill="#e0dfe3"/><rect x="10" y="5" width="1" height="1" fill="#e4e3e7"/><rect x="11" y="5" width="1" height="1" fill="#ffffff"/><rect x="4" y="6" width="6" height="1" fill="#e0dfe3"/><rect x="10" y="6" width="1" height="1" fill="#e4e3e7"/><rect x="11" y="6" width="1" height="1" fill="#ffffff"/><rect x="4" y="7" width="6" height="1" fill="#e0dfe3"/><rect x="10" y="7" width="1" height="1" fill="#e4e3e7"/><rect x="11" y="7" width="1" height="1" fill="#ffffff"/><rect x="4" y="8" width="5" height="1" fill="#e0dfe3"/><rect x="9" y="8" width="1" height="1" fill="#e4e3e7"/><rect x="10" y="8" width="1" height="1" fill="#ffffff"/><rect x="4" y="9" width="4" height="1" fill="#e0dfe3"/><rect x="8" y="9" width="2" height="1" fill="#e4e3e7"/><rect x="10" y="9" width="1" height="1" fill="#ffffff"/><rect x="4" y="10" width="4" height="1" fill="#e4e3e7"/><rect x="8" y="10" width="2" height="1" fill="#ffffff"/><rect x="4" y="11" width="4" height="1" fill="#ffffff"/></svg>
<svg width="12" height="12" viewBox="0 0 12 12" shape-rendering="crispEdges" style="position:absolute;left:613px;top:200px"><rect x="4" y="0" width="4" height="1" fill="#9d9da1"/><rect x="2" y="1" width="2" height="1" fill="#9d9da1"/><rect x="4" y="1" width="4" height="1" fill="#716f64"/><rect x="8" y="1" width="2" height="1" fill="#9d9da1"/><rect x="1" y="2" width="1" height="1" fill="#9d9da1"/><rect x="2" y="2" width="2" height="1" fill="#716f64"/><rect x="4" y="2" width="4" height="1" fill="#ffffff"/><rect x="8" y="2" width="2" height="1" fill="#716f64"/><rect x="10" y="2" width="1" height="1" fill="#ffffff"/><rect x="1" y="3" width="1" height="1" fill="#9d9da1"/><rect x="2" y="3" width="1" height="1" fill="#716f64"/><rect x="3" y="3" width="6" height="1" fill="#ffffff"/><rect x="9" y="3" width="1" height="1" fill="#e4e3e7"/><rect x="10" y="3" width="1" height="1" fill="#ffffff"/><rect x="0" y="4" width="1" height="1" fill="#9d9da1"/><rect x="1" y="4" width="1" height="1" fill="#716f64"/><rect x="2" y="4" width="8" height="1" fill="#ffffff"/><rect x="10" y="4" width="1" height="1" fill="#e4e3e7"/><rect x="11" y="4" width="1" height="1" fill="#ffffff"/><rect x="0" y="5" width="1" height="1" fill="#9d9da1"/><rect x="1" y="5" width="1" height="1" fill="#716f64"/><rect x="2" y="5" width="8" height="1" fill="#ffffff"/><rect x="10" y="5" width="1" height="1" fill="#e4e3e7"/><rect x="11" y="5" width="1" height="1" fill="#ffffff"/><rect x="0" y="6" width="1" height="1" fill="#9d9da1"/><rect x="1" y="6" width="1" height="1" fill="#716f64"/><rect x="2" y="6" width="8" height="1" fill="#ffffff"/><rect x="10" y="6" width="1" height="1" fill="#e4e3e7"/><rect x="11" y="6" width="1" height="1" fill="#ffffff"/><rect x="0" y="7" width="1" height="1" fill="#9d9da1"/><rect x="1" y="7" width="1" height="1" fill="#716f64"/><rect x="2" y="7" width="8" height="1" fill="#ffffff"/><rect x="10" y="7" width="1" height="1" fill="#e4e3e7"/><rect x="11" y="7" width="1" height="1" fill="#ffffff"/><rect x="1" y="8" width="1" height="1" fill="#9d9da1"/><rect x="2" y="8" width="1" height="1" fill="#716f64"/><rect x="3" y="8" width="6" height="1" fill="#ffffff"/><rect x="9" y="8" width="1" height="1" fill="#e4e3e7"/><rect x="10" y="8" width="1" height="1" fill="#ffffff"/><rect x="1" y="9" width="1" height="1" fill="#9d9da1"/><rect x="2" y="9" width="2" height="1" fill="#e4e3e7"/><rect x="4" y="9" width="4" height="1" fill="#ffffff"/><rect x="8" y="9" width="2" height="1" fill="#e4e3e7"/><rect x="10" y="9" width="1" height="1" fill="#ffffff"/><rect x="2" y="10" width="2" height="1" fill="#ffffff"/><rect x="4" y="10" width="4" height="1" fill="#e4e3e7"/><rect x="8" y="10" width="2" height="1" fill="#ffffff"/><rect x="4" y="11" width="4" height="1" fill="#ffffff"/></svg>
<svg width="12" height="12" viewBox="0 0 12 12" shape-rendering="crispEdges" style="position:absolute;left:668px;top:200px"><rect x="4" y="0" width="4" height="1" fill="#9d9da1"/><rect x="4" y="1" width="4" height="1" fill="#716f64"/><rect x="8" y="1" width="2" height="1" fill="#9d9da1"/><rect x="4" y="2" width="4" height="1" fill="#ffffff"/><rect x="8" y="2" width="2" height="1" fill="#716f64"/><rect x="10" y="2" width="1" height="1" fill="#ffffff"/><rect x="4" y="3" width="5" height="1" fill="#ffffff"/><rect x="9" y="3" width="1" height="1" fill="#e4e3e7"/><rect x="10" y="3" width="1" height="1" fill="#ffffff"/><rect x="4" y="4" width="1" height="1" fill="#ffffff"/><rect x="5" y="4" width="2" height="1" fill="#000000"/><rect x="7" y="4" width="3" height="1" fill="#ffffff"/><rect x="10" y="4" width="1" height="1" fill="#e4e3e7"/><rect x="11" y="4" width="1" height="1" fill="#ffffff"/><rect x="4" y="5" width="4" height="1" fill="#000000"/><rect x="8" y="5" width="2" height="1" fill="#ffffff"/><rect x="10" y="5" width="1" height="1" fill="#e4e3e7"/><rect x="11" y="5" width="1" height="1" fill="#ffffff"/><rect x="4" y="6" width="4" height="1" fill="#000000"/><rect x="8" y="6" width="2" height="1" fill="#ffffff"/><rect x="10" y="6" width="1" height="1" fill="#e4e3e7"/><rect x="11" y="6" width="1" height="1" fill="#ffffff"/><rect x="4" y="7" width="1" height="1" fill="#ffffff"/><rect x="5" y="7" width="2" height="1" fill="#000000"/><rect x="7" y="7" width="3" height="1" fill="#ffffff"/><rect x="10" y="7" width="1" height="1" fill="#e4e3e7"/><rect x="11" y="7" width="1" height="1" fill="#ffffff"/><rect x="4" y="8" width="5" height="1" fill="#ffffff"/><rect x="9" y="8" width="1" height="1" fill="#e4e3e7"/><rect x="10" y="8" width="1" height="1" fill="#ffffff"/><rect x="4" y="9" width="4" height="1" fill="#ffffff"/><rect x="8" y="9" width="2" height="1" fill="#e4e3e7"/><rect x="10" y="9" width="1" height="1" fill="#ffffff"/><rect x="4" y="10" width="4" height="1" fill="#e4e3e7"/><rect x="8" y="10" width="2" height="1" fill="#ffffff"/><rect x="4" y="11" width="4" height="1" fill="#ffffff"/></svg>
<!-- PO group frame -->
<div class="ln" style="left:512px;top:169px;width:219px;height:1px"></div>
<div class="lw" style="left:513px;top:170px;width:217px;height:1px"></div>
<div class="ln" style="left:512px;top:169px;width:1px;height:162px"></div>
<div class="lw" style="left:513px;top:170px;width:1px;height:160px"></div>
<div class="ln" style="left:512px;top:330px;width:219px;height:1px"></div>
<div class="lw" style="left:512px;top:331px;width:220px;height:1px"></div>
<div class="ln" style="left:730px;top:169px;width:1px;height:162px"></div>
<div class="lw" style="left:731px;top:169px;width:1px;height:163px"></div>
<div class="gt" style="left:519px;top:163px;width:55px"></div>

<svg class="led" style="left:526px;top:180px" viewBox="0 0 17 17"><circle cx="9.3" cy="9.3" r="7.2" fill="#fff"/><circle cx="8.5" cy="8.5" r="7.4" fill="#9d9da1"/><path d="M5.3 8.7 L8.7 5.3" stroke="#fff" stroke-width="1.5" fill="none"/></svg>
<svg class="led" style="left:526px;top:199px" viewBox="0 0 17 17"><circle cx="8.5" cy="8.5" r="7" fill="#ffff00" stroke="#000" stroke-width="1.2"/><path d="M5.3 8.7 L8.7 5.3" stroke="#fff" stroke-width="1.5" fill="none"/></svg>



<div class="sunk cmb" style="left:625px;top:224px;width:80px;height:22px"><div class="btn dd rc"><svg viewBox="0 0 8 5" shape-rendering="crispEdges"><path d="M0 0h7v1h-1v1h-1v1h-1v1h-1v-1h-1v-1h-1v-1h-1z" fill="#000"/></svg></div></div>
<div class="sunk cmb off" style="left:625px;top:247px;width:80px;height:22px"><div class="btn dd rc"><svg viewBox="0 0 8 5" shape-rendering="crispEdges"><path d="M1 1h7v1h-1v1h-1v1h-1v1h-1v-1h-1v-1h-1v-1h-1z" fill="#fff"/><path d="M0 0h7v1h-1v1h-1v1h-1v1h-1v-1h-1v-1h-1v-1h-1z" fill="#9d9da1"/></svg></div></div>

<!-- progress -->
<div style="position:absolute;left:513px;top:335px;width:215px;height:16px;background:#b2b4bf;box-sizing:border-box;border:1px solid;border-color:#9d9da1 #fff #fff #9d9da1"></div>
<!-- buttons -->
<div class="btn pb" style="left:550px;top:361px;width:48px;height:23px"></div>
<div class="btn pb" style="left:668px;top:361px;width:48px;height:23px"></div>

<div class="cov" style="left:740px;top:1px;width:2px;height:419px"></div>
<div class="cov" style="left:741px;top:0;width:1px;height:420px;background:#ededf0"></div>
<div class="t" style="left:7.36px;top:1px;transform:scaleX(0.9800);">320</div>
<div class="t" style="left:7.36px;top:41px;transform:scaleX(0.9800);">240</div>
<div class="t" style="left:7.36px;top:81px;transform:scaleX(0.9800);">160</div>
<div class="t" style="left:13.24px;top:121px;transform:scaleX(0.9800);">80</div>
<div class="t" style="left:7.36px;top:161px;transform:scaleX(0.9800);">320</div>
<div class="t" style="left:7.36px;top:201px;transform:scaleX(0.9800);">240</div>
<div class="t" style="left:7.36px;top:241px;transform:scaleX(0.9800);">160</div>
<div class="t" style="left:13.24px;top:281px;transform:scaleX(0.9800);">80</div>
<div class="t" style="left:484.25px;top:2px;transform:scaleX(1.0000);">16x</div>
<div class="t" style="left:484.25px;top:42px;transform:scaleX(1.0000);">12x</div>
<div class="t" style="left:484.75px;top:82px;transform:scaleX(1.0000);">8x</div>
<div class="t" style="left:484.75px;top:122px;transform:scaleX(1.0000);">4x</div>
<div class="t" style="left:111.28px;top:332px;transform:scaleX(0.9639);">1GB</div>
<div class="t" style="left:211.52px;top:332px;transform:scaleX(0.9524);">2GB</div>
<div class="t" style="left:311.76px;top:332px;transform:scaleX(0.9412);">3GB</div>
<div class="t" style="left:411.76px;top:332px;transform:scaleX(0.9412);">4GB</div>
<div class="t mw" style="left:0;top:353px;"><span style="left:42.40px;transform:scaleX(0.8000)">PI</span> <span style="left:54.00px;transform:scaleX(0.9890)">Total</span></div>
<div class="t" style="left:45.25px;top:367px;transform:scaleX(0.9867);">88183</div>
<div class="t mw" style="left:0;top:353px;"><span style="left:108.40px;transform:scaleX(0.8000)">PI</span> <span style="left:118.50px;transform:scaleX(0.9347)">Peak</span></div>
<div class="t" style="left:116.84px;top:367px;transform:scaleX(1.0145);">180</div>
<div class="t mw" style="left:0;top:353px;"><span style="left:170.40px;transform:scaleX(0.8000)">PI</span> <span style="left:182.00px;transform:scaleX(1.0630)">Avg</span></div>
<div class="t" style="left:185.41px;top:367px;transform:scaleX(0.9739);">25</div>
<div class="t mw" style="left:0;top:353px;"><span style="left:233.22px;transform:scaleX(0.9017)">PO</span> <span style="left:251.20px;transform:scaleX(0.9802)">Total</span></div>
<div class="t" style="left:242.04px;top:367px;transform:scaleX(1.0068);">16322</div>
<div class="t mw" style="left:0;top:353px;"><span style="left:295.12px;transform:scaleX(0.9017)">PO</span> <span style="left:311.91px;transform:scaleX(0.9184)">Peak</span></div>
<div class="t" style="left:314.47px;top:367px;transform:scaleX(0.9797);">178</div>
<div class="t mw" style="left:0;top:353px;"><span style="left:370.92px;transform:scaleX(0.9017)">PO</span> <span style="left:389.00px;transform:scaleX(1.0575)">Avg</span></div>
<div class="t" style="left:382.50px;top:367px;transform:scaleX(1.0636);">16</div>
<div class="t" style="left:369.50px;top:398px;transform:scaleX(1.0079);"><u>R</u>efresh</div>
<div class="t mw" style="left:0;top:3px;"><span style="left:520.19px;transform:scaleX(0.8121)">PIE</span> <span style="left:537.73px;transform:scaleX(0.9324)">(8ECC)</span> <span style="left:575.30px;transform:scaleX(0.9231)">/</span> <span style="left:580.52px;transform:scaleX(0.9561)">Speed</span> <span style="left:614.71px;transform:scaleX(0.9763)">Graph</span></div>
<div class="t mw" style="left:0;top:163px;"><span style="left:520.13px;transform:scaleX(0.8949)">PO</span> <span style="left:537.63px;transform:scaleX(0.9352)">(8ECC)</span></div>
<div class="t mw" style="left:0;top:26px;"><span style="left:518.35px;transform:scaleX(0.8632)">MID</span> <span style="left:538.53px;transform:scaleX(0.9490)">Code</span></div>
<div class="t" style="left:641.32px;top:24px;transform:scaleX(0.9077);">RITEKG05</div>
<div class="t" style="left:519.40px;top:50px;transform:scaleX(0.9596);">Type/Book</div>
<div class="t" style="left:607.96px;top:48px;transform:scaleX(0.9450);">DVD-R</div>
<div class="t" style="left:678.98px;top:48px;transform:scaleX(0.9642);">DVD-R</div>
<div class="t mw" style="left:0;top:76px;"><span style="left:552.19px;transform:scaleX(1.0128)">Show</span> <span style="left:584.19px;transform:scaleX(0.8182)">PIE</span></div>
<div class="t" style="left:629.17px;top:75px;transform:scaleX(0.9772);">Line</div>
<div class="t" style="left:685.30px;top:75px;transform:scaleX(1.0141);">Vertical</div>
<div class="t mw" style="left:0;top:95px;"><span style="left:552.19px;transform:scaleX(1.0128)">Show</span> <span style="left:584.41px;transform:scaleX(0.9789)">Speed</span></div>
<div class="t mw" style="left:0;top:118px;"><span style="left:523.29px;transform:scaleX(0.8121)">PIE</span> <span style="left:540.41px;transform:scaleX(0.9774)">Scale</span> <span style="left:570.36px;transform:scaleX(1.0776)">(Left)</span></div>
<div class="t mw" style="left:0;top:117px;"><span style="left:628.90px;transform:scaleX(0.9798)">Auto</span> <span style="left:654.43px;transform:scaleX(0.8939)">Peak</span></div>
<div class="t mw" style="left:0;top:141px;"><span style="left:524.20px;transform:scaleX(0.9919)">Speed</span> <span style="left:558.70px;transform:scaleX(1.0154)">/</span> <span style="left:565.00px;transform:scaleX(1.0431)">Accuracy</span></div>
<div class="t" style="left:628.06px;top:141px;transform:scaleX(0.9910);">Balanced</div>
<div class="t dis mw" style="left:0;top:182px;"><span style="left:554.28px;transform:scaleX(1.0422)">Show</span> <span style="left:587.00px;transform:scaleX(0.9011)">Jitter</span></div>
<div class="t dis" style="left:628.95px;top:182px;transform:scaleX(0.9500);">Instant</div>
<div class="t dis" style="left:685.30px;top:182px;transform:scaleX(0.9938);">Average</div>
<div class="t mw" style="left:0;top:202px;"><span style="left:554.29px;transform:scaleX(1.0128)">Show</span> <span style="left:586.11px;transform:scaleX(0.9153)">PO</span></div>
<div class="t" style="left:629.17px;top:201px;transform:scaleX(0.9772);">Line</div>
<div class="t" style="left:685.30px;top:201px;transform:scaleX(1.0141);">Vertical</div>
<div class="t mw" style="left:0;top:230px;"><span style="left:524.03px;transform:scaleX(0.8949)">PO</span> <span style="left:541.52px;transform:scaleX(0.9660)">Scale</span> <span style="left:571.36px;transform:scaleX(1.0816)">(Left)</span></div>
<div class="t mw" style="left:0;top:229px;"><span style="left:628.90px;transform:scaleX(0.9798)">Auto</span> <span style="left:654.43px;transform:scaleX(0.8939)">Peak</span></div>
<div class="t dis mw" style="left:0;top:254px;"><span style="left:525.00px;transform:scaleX(0.9011)">Jitter</span> <span style="left:550.21px;transform:scaleX(0.9774)">Scale</span> <span style="left:580.83px;transform:scaleX(0.9438)">(Right)</span></div>
<div class="t dis mw" style="left:0;top:252px;"><span style="left:628.90px;transform:scaleX(0.9798)">Auto</span> <span style="left:654.43px;transform:scaleX(0.8939)">Peak</span></div>
<div class="t" style="left:529.31px;top:283px;transform:scaleX(0.9766);">Current</div>
<div class="t" style="left:533.12px;top:297px;transform:scaleX(0.9671);">23127F</div>
<div class="t mw" style="left:0;top:283px;"><span style="left:594.06px;transform:scaleX(0.9800)">Max</span> <span style="left:617.04px;transform:scaleX(1.0150)">LBA</span></div>
<div class="t" style="left:598.12px;top:297px;transform:scaleX(0.9671);">23127F</div>
<div class="t dis mw" style="left:0;top:283px;height:10.6px;overflow:hidden;"><span style="left:660.00px;transform:scaleX(0.9095)">Jitter</span> <span style="left:686.00px;transform:scaleX(1.0411)">Avg</span></div>
<div class="t dis" style="left:675.44px;top:297px;transform:scaleX(1.0439);">---</div>
<div class="t wht mw" style="left:0;top:337px;"><span style="left:581.46px;transform:scaleX(0.8550)">100%</span> <span style="left:609.49px;transform:scaleX(1.0184)">Complete</span></div>
<div class="t" style="left:561.80px;top:366px;transform:scaleX(0.9634);"><u>S</u>tart</div>
<div class="t" style="left:680.20px;top:366px;transform:scaleX(0.9977);">S<u>t</u>op</div>
</div>
</body>
</html>
